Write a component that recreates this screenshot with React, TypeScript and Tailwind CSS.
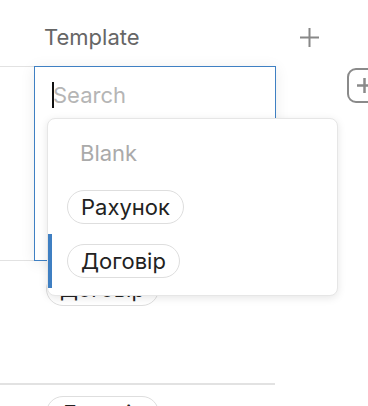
import React from "react";

const Pill = ({ label }: { label: string }) => (
  <span className="inline-flex h-[34px] items-center rounded-full border border-[#dedede] bg-white px-[13px] text-[22px] leading-none text-[#222]">
    {label}
  </span>
);

const App = () => {
  return (
    <div
      className="relative h-[406px] w-[368px] overflow-hidden bg-white"
      style={{ fontFamily: "Inter, 'Noto Sans', sans-serif" }}
    >
      {/* header */}
      <div className="flex h-[66px] items-center pt-[9px]">
        <div className="flex w-[275px] shrink-0 items-center pl-[44px]">
          <span className="text-[22px] text-[#666]">Template</span>
        </div>
        <svg
          width="21"
          height="21"
          viewBox="0 0 21 21"
          className="ml-[24px] text-[#888]"
        >
          <path d="M10.5 1v19M1 10.5h19" stroke="currentColor" strokeWidth="2" />
        </svg>
      </div>

      {/* table + side */}
      <div className="flex">
        <div className="w-[275px] shrink-0">
          <div className="h-[194px] border-t border-[#e2e2e2]" />
          <div className="h-[123px] border-t border-[#e2e2e2] pl-[46px] pt-[11px]">
            <Pill label="Договір" />
          </div>
          <div className="h-[40px] border-t-2 border-[#e2e2e2] pl-[46px] pt-[11px]">
            <Pill label="Договір" />
          </div>
        </div>
        <div className="shrink-0 pl-[72px] pt-[2px]">
          <div className="flex h-[35px] w-[35px] items-center justify-center rounded-[9px] border-2 border-[#8a8a8a]">
            <svg width="19" height="19" viewBox="0 0 19 19" className="text-[#8a8a8a]">
              <path d="M9.5 2v15M2 9.5h15" stroke="currentColor" strokeWidth="2.5" />
            </svg>
          </div>
        </div>
      </div>

      {/* cell editor */}
      <div className="absolute left-[34px] top-[66px] h-[195px] w-[242px] border border-[#3f80c3] bg-white shadow-[0_2px_14px_rgba(0,0,0,0.08)]">
        <div className="flex items-center pl-[17px] pt-[15px]">
          <span className="h-[26px] w-[2px] bg-[#111]" />
          <span className="-ml-[1px] text-[22px] leading-[26px] text-[#b5b5b5]">Search</span>
        </div>
      </div>

      {/* dropdown */}
      <div className="absolute left-[47px] top-[118px] w-[291px] rounded-[8px] border border-[#e6e6e6] bg-white py-[7px] shadow-[0_2px_8px_rgba(0,0,0,0.1)]">
        <div className="flex h-[54px] items-center pl-[32px] text-[22px] text-[#aaa]">Blank</div>
        <div className="flex h-[54px] items-center pl-[19px]">
          <Pill label="Рахунок" />
        </div>
        <div className="relative flex h-[54px] items-center pl-[19px]">
          <span className="absolute left-0 top-0 h-full w-[4px] bg-[#3f7fc2]" />
          <Pill label="Договір" />
        </div>
      </div>
    </div>
  );
};

export default App;
